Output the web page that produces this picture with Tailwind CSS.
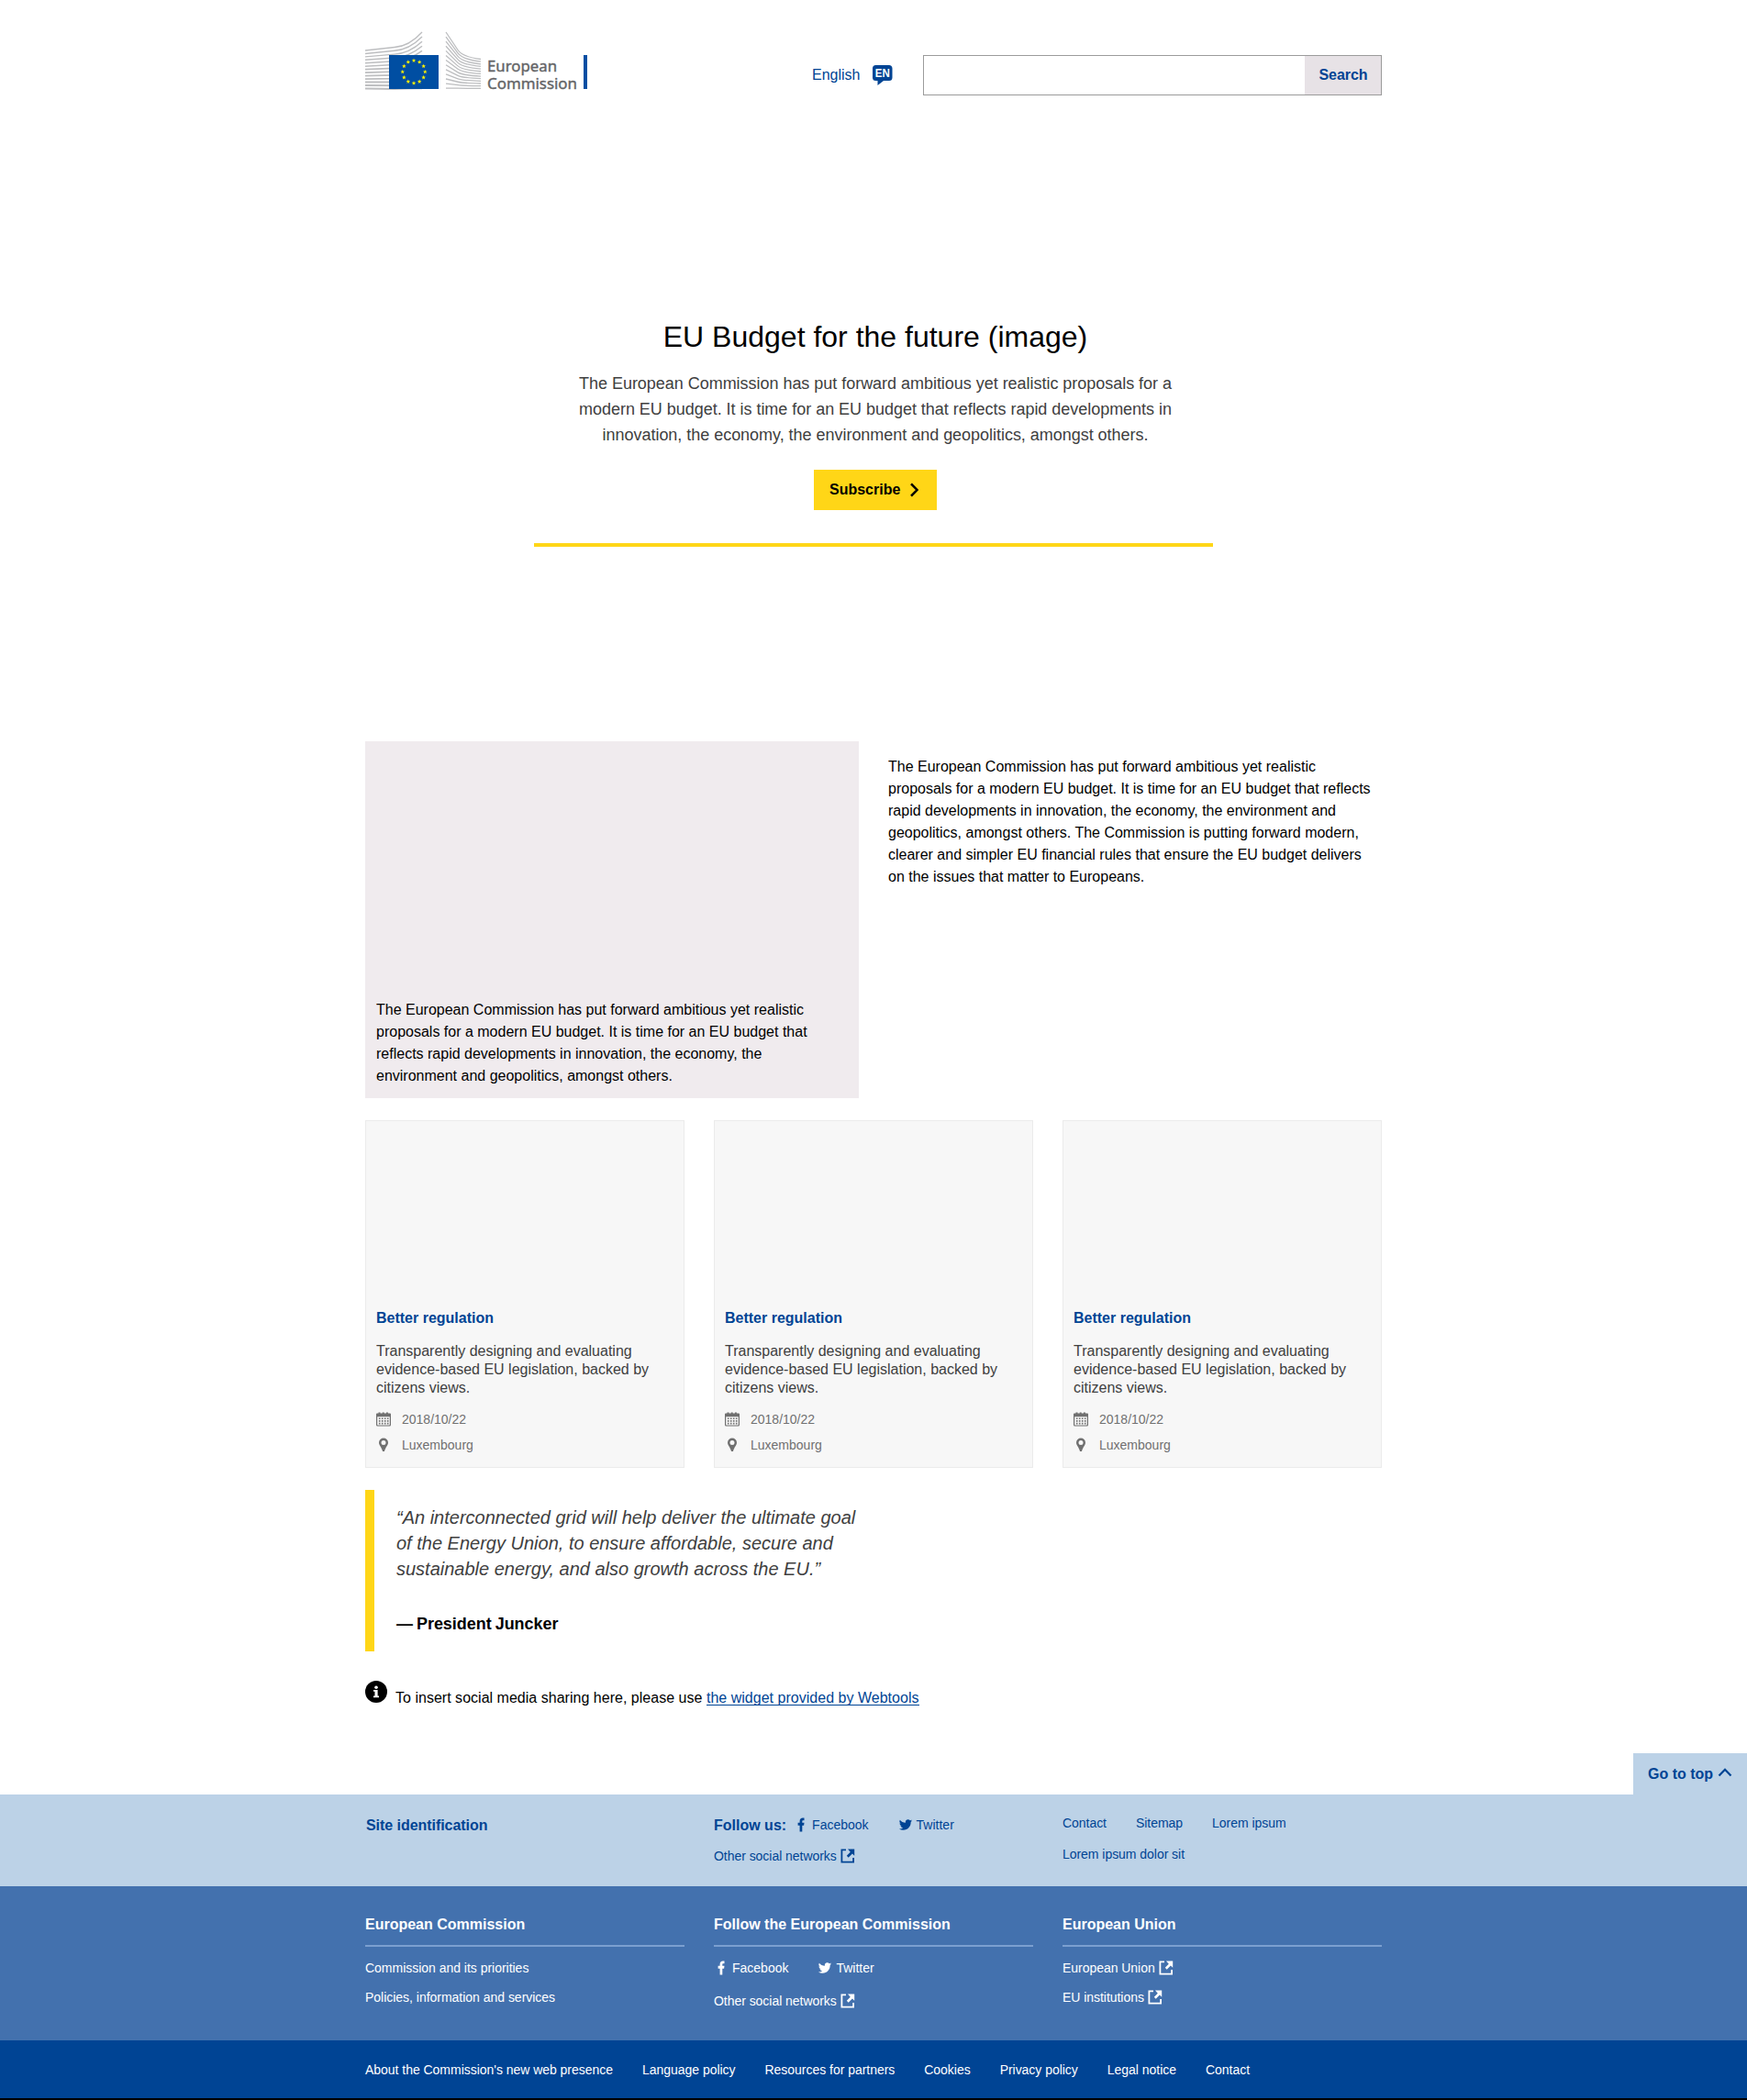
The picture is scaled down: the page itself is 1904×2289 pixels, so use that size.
<!DOCTYPE html>
<html lang="en">
<head>
<meta charset="utf-8">
<title>EU Budget for the future</title>
<script src="https://cdn.jsdelivr.net/npm/@tailwindcss/browser@4"></script>
</head>
<body class="bg-white font-['Liberation_Sans',Arial,sans-serif] text-base text-black">
<!-- icon symbols -->
<svg class="hidden">
  <symbol id="fb" viewBox="0 0 16 16"><path fill="currentColor" d="M6.600 15.500V8.700H4.600V5.800h2V4.200C6.600 1.700 7.800.5 10 .5c.8 0 1.400.1 1.500.1v2.600h-1c-1 0-1.200.5-1.200 1.200v1.400h2.200l-.4 2.900H9.300v6.800z"/></symbol>
  <symbol id="tw" viewBox="-1.500 -1.500 27 27"><path fill="currentColor" d="M23.950 4.570a10 10 0 0 1-2.820.77 4.960 4.960 0 0 0 2.160-2.720c-.95.55-2 .95-3.130 1.180a4.920 4.920 0 0 0-8.380 4.480C7.690 8.100 4.070 6.130 1.640 3.160a4.920 4.920 0 0 0 1.520 6.570 4.900 4.900 0 0 1-2.230-.61v.06a4.920 4.920 0 0 0 3.950 4.830 5 5 0 0 1-2.210.08 4.940 4.940 0 0 0 4.600 3.420A9.870 9.870 0 0 1 0 19.540a14 14 0 0 0 7.550 2.210c9.050 0 14-7.500 14-13.980 0-.21 0-.42-.02-.63a9.940 9.940 0 0 0 2.460-2.550z"/></symbol>
  <symbol id="ext" viewBox="0 0 16 16"><path fill="none" stroke="currentColor" stroke-width="1.800" d="M6 1.400H1.400v13.200h12.700V10"/><path fill="currentColor" d="M8 .5h7.200v7.200l-2.300-2.300-4.200 4.300-1.900-1.900 4-4.100z"/></symbol>
  <symbol id="cal" viewBox="0 0 16 16"><path fill="currentColor" fill-rule="evenodd" d="M1 1.500h1.500V.5h2v1h2.200v-1h2v1h2.200v-1h2v1H15a1 1 0 0 1 1 1V14a1.500 1.500 0 0 1-1.500 1.500h-13A1.500 1.500 0 0 1 0 14V2.500a1 1 0 0 1 1-1zM1.200 5.200v8.600c0 .4.2.6.6.6h12.400c.4 0 .6-.2.6-.6V5.200z"/><path stroke="currentColor" stroke-width="1.600" stroke-dasharray="1.600 1.400" d="M2.900 7.200h10.600M2.900 9.900h10.600M2.900 12.600h10.600"/></symbol>
  <symbol id="pin" viewBox="0 0 16 16"><path fill="currentColor" fill-rule="evenodd" d="M8 .5a5 5 0 0 1 5 5c0 2.600-2.800 4.800-4 9.500H7C5.800 10.300 3 8.100 3 5.500a5 5 0 0 1 5-5zm0 2.400a2.500 2.500 0 1 0 0 5 2.500 2.500 0 0 0 0-5z"/></symbol>
</svg>

<header class="mx-auto flex h-[120px] w-[1108px] items-start">
  <svg class="mt-[30px] h-[72px] w-[250px]" viewBox="398 30 250 72">
    <g id="rays" fill="none" stroke="#bdbec0"></g>
    <rect x="424" y="60" width="54" height="37" fill="#004ea2"/>
    <g id="stars" fill="#fff200"></g>
    <g font-family="'Noto Sans','Open Sans',sans-serif" font-size="16.500" fill="#646567" stroke="#646567" stroke-width=".4">
      <text x="531" y="77.600" textLength="76" lengthAdjust="spacingAndGlyphs">European</text>
      <text x="531" y="96.700" textLength="98" lengthAdjust="spacingAndGlyphs">Commission</text>
    </g>
    <rect x="636" y="60" width="4" height="37" fill="#004ea2"/>
  </svg>
  <a class="mt-[70px] ml-[237px] flex h-6 items-center text-[#004494]">English
    <svg class="ml-[13px] h-6 w-6" viewBox="0 0 24 24"><path fill="#004494" d="M4.500 1h14A3.500 3.500 0 0 1 22.500 4.500v10a3.500 3.500 0 0 1-3.500 3.500H13l-6.500 5V18h-2A3.500 3.500 0 0 1 1 14.500v-10A3.500 3.500 0 0 1 4.500 1z"/><text x="11.800" y="14" text-anchor="middle" textLength="16" lengthAdjust="spacingAndGlyphs" font-family="Liberation Sans" font-weight="700" font-size="13" fill="#fff">EN</text></svg>
  </a>
  <div class="mt-[60px] ml-auto flex h-11 w-[500px] border border-[#9b9b9b]">
    <div class="flex-1"></div>
    <div class="flex w-[83px] items-center justify-center bg-[#e7e2e6] pl-px font-bold tracking-[-0.05px] text-[#004494]">Search</div>
  </div>
</header>

<section class="mx-auto flex w-[740px] flex-col items-center border-b-4 border-[#ffd617] pt-[227px] pb-9 pl-1">
  <h1 class="text-[32px] leading-10">EU Budget for the future (image)</h1>
  <p class="mt-[17px] w-[660px] text-center text-lg leading-7 tracking-[-0.03px] text-[#404040]">The European Commission has put forward ambitious yet realistic proposals for a modern EU budget. It is time for an EU budget that reflects rapid developments in innovation, the economy, the environment and geopolitics, amongst others.</p>
  <a class="mt-6 flex h-11 w-[134px] items-center bg-[#ffd617] pl-[17px] font-bold">Subscribe
    <svg class="ml-2 h-4 w-4" viewBox="0 0 16 16"><path fill="none" stroke="#000" stroke-width="2.500" d="M4 1.300 10.500 8 4 14.700"/></svg>
  </a>
</section>

<main class="mx-auto w-[1108px] pt-[212px]">
  <div class="grid grid-cols-2 gap-8">
    <div class="flex h-[389px] flex-col justify-end bg-[#f0ebee] p-3 leading-6">
      <p class="w-[490px]">The European Commission has put forward ambitious yet realistic proposals for a modern EU budget. It is time for an EU budget that reflects rapid developments in innovation, the economy, the environment and geopolitics, amongst others.</p>
    </div>
    <p class="pt-4 leading-6">The European Commission has put forward ambitious yet realistic proposals for a modern EU budget. It is time for an EU budget that reflects rapid developments in innovation, the economy, the environment and geopolitics, amongst others. The Commission is putting forward modern, clearer and simpler EU financial rules that ensure the EU budget delivers on the issues that matter to Europeans.</p>
  </div>

  <div class="mt-6 grid grid-cols-3 gap-8">
    <article class="h-[379px] border border-[#ebebeb] bg-[#f7f7f7] px-[11px] pt-[203px]">
      <h2 class="leading-6 font-bold text-[#004494]">Better regulation</h2>
      <p class="mt-[14px] leading-5 text-[#404040]">Transparently designing and evaluating evidence-based EU legislation, backed by citizens views.</p>
      <div class="mt-[14px] flex h-5 items-center text-sm text-[#707070]"><svg class="mr-3 h-4 w-4"><use href="#cal"/></svg>2018/10/22</div>
      <div class="mt-2 flex h-5 items-center text-sm text-[#707070]"><svg class="mr-3 h-4 w-4"><use href="#pin"/></svg>Luxembourg</div>
    </article>
    <article class="h-[379px] border border-[#ebebeb] bg-[#f7f7f7] px-[11px] pt-[203px]">
      <h2 class="leading-6 font-bold text-[#004494]">Better regulation</h2>
      <p class="mt-[14px] leading-5 text-[#404040]">Transparently designing and evaluating evidence-based EU legislation, backed by citizens views.</p>
      <div class="mt-[14px] flex h-5 items-center text-sm text-[#707070]"><svg class="mr-3 h-4 w-4"><use href="#cal"/></svg>2018/10/22</div>
      <div class="mt-2 flex h-5 items-center text-sm text-[#707070]"><svg class="mr-3 h-4 w-4"><use href="#pin"/></svg>Luxembourg</div>
    </article>
    <article class="h-[379px] border border-[#ebebeb] bg-[#f7f7f7] px-[11px] pt-[203px]">
      <h2 class="leading-6 font-bold text-[#004494]">Better regulation</h2>
      <p class="mt-[14px] leading-5 text-[#404040]">Transparently designing and evaluating evidence-based EU legislation, backed by citizens views.</p>
      <div class="mt-[14px] flex h-5 items-center text-sm text-[#707070]"><svg class="mr-3 h-4 w-4"><use href="#cal"/></svg>2018/10/22</div>
      <div class="mt-2 flex h-5 items-center text-sm text-[#707070]"><svg class="mr-3 h-4 w-4"><use href="#pin"/></svg>Luxembourg</div>
    </article>
  </div>

  <blockquote class="mt-6 h-[176px] w-[554px] border-l-[10px] border-[#ffd617] pt-4 pl-6">
    <p class="text-xl leading-7 text-[#404040] italic">“An interconnected grid will help deliver the ultimate goal of the Energy Union, to ensure affordable, secure and sustainable energy, and also growth across the EU.”</p>
    <footer class="mt-8 text-lg leading-7 font-bold tracking-[-0.03px] [word-spacing:-1px]">— President Juncker</footer>
  </blockquote>

  <div class="mt-8 flex h-[79px] items-start">
    <svg class="h-6 w-6" viewBox="0 0 24 24"><circle cx="12" cy="12" r="12"/><circle cx="12" cy="7.200" r="1.800" fill="#fff"/><path fill="#fff" d="M9 10h4.600v6.500H15v1.800H9v-1.800h1.500v-4.700H9z"/></svg>
    <p class="mt-[7px] ml-[9px] leading-6 tracking-[0.02px]">To insert social media sharing here, please use <a class="inline-block h-[17px] border-b border-[#004494] leading-[18px] text-[#004494]">the widget provided by Webtools</a></p>
  </div>
</main>

<div class="ml-auto flex h-[45px] w-[124px] items-center bg-[#bcd2e7] pl-4 font-bold text-[#004494]">Go to top
  <svg class="ml-[5px] h-4 w-4" viewBox="0 0 16 16"><path fill="none" stroke="currentColor" stroke-width="2.300" d="M1.500 9.500 8 2.800l6.500 6.700"/></svg>
</div>

<footer>
  <div class="h-[100px] bg-[#bcd2e7] text-sm text-[#004494]">
    <div class="mx-auto grid w-[1108px] grid-cols-3 gap-8">
      <h3 class="mt-[22px] pl-px text-base font-bold tracking-[-0.05px]">Site identification</h3>
      <div class="mt-[22px]">
        <div class="flex h-6 items-center"><b class="mr-2 text-base">Follow us:</b><div class="-mt-0.5 flex items-center"><svg class="mr-1 h-4 w-4"><use href="#fb"/></svg>Facebook<svg class="mr-1 ml-8 h-4 w-4"><use href="#tw"/></svg>Twitter</div></div>
        <div class="mt-[9px] flex h-6 items-center tracking-[-0.04px]">Other social networks<svg class="ml-1 h-4 w-4"><use href="#ext"/></svg></div>
      </div>
      <div class="mt-[21px] flex flex-wrap content-start gap-x-8 gap-y-[14px] leading-5 tracking-[-0.04px]"><a>Contact</a><a>Sitemap</a><a>Lorem ipsum</a><a>Lorem ipsum dolor sit</a></div>
    </div>
  </div>
  <div class="h-[168px] bg-[#4371ae] text-sm text-white">
    <div class="mx-auto grid w-[1108px] grid-cols-3 gap-8 pt-[30px]">
      <div>
        <h3 class="h-9 border-b-2 border-[#7b9fd0] text-base font-bold">European Commission</h3>
        <div class="mt-[11px] flex h-6 items-center tracking-[-0.02px]">Commission and its priorities</div>
        <div class="mt-2 flex h-6 items-center tracking-[-0.02px]">Policies, information and services</div>
      </div>
      <div>
        <h3 class="h-9 border-b-2 border-[#7b9fd0] text-base font-bold">Follow the European Commission</h3>
        <div class="mt-[11px] flex h-6 items-center"><svg class="mr-1 h-4 w-4"><use href="#fb"/></svg>Facebook<svg class="mr-1 ml-8 h-4 w-4"><use href="#tw"/></svg>Twitter</div>
        <div class="mt-3 flex h-6 items-center tracking-[-0.04px]">Other social networks<svg class="ml-1 h-4 w-4"><use href="#ext"/></svg></div>
      </div>
      <div>
        <h3 class="h-9 border-b-2 border-[#7b9fd0] text-base font-bold">European Union</h3>
        <div class="mt-[11px] flex h-6 items-center tracking-[-0.04px]">European Union<svg class="ml-1 h-4 w-4"><use href="#ext"/></svg></div>
        <div class="mt-2 flex h-6 items-center tracking-[-0.04px]">EU institutions<svg class="ml-1 h-4 w-4"><use href="#ext"/></svg></div>
      </div>
    </div>
  </div>
  <div class="h-[65px] border-b-2 border-black bg-[#004494] text-sm tracking-[-0.03px] text-white">
    <nav class="mx-auto flex h-16 w-[1108px] items-center gap-8"><a>About the Commission's new web presence</a><a>Language policy</a><a>Resources for partners</a><a>Cookies</a><a>Privacy policy</a><a>Legal notice</a><a>Contact</a></nav>
  </div>
</footer>

<script>
  // Curved rays on both sides of the flag, then the circle of twelve stars.
  let rays = '';
  for (let i = 0; i < 13; i++) {
    const l = 55 + i * 3.45, r = 35 + i * 5.1, k = 50.5 + i * 3.8, f = (12 - i) / 12;
    rays += `<path stroke-width="${(1.3 + i * 0.06).toFixed(2)}" d="M398 ${l}L430 ${k + 1}Q446 ${k} 460 ${r}"/>`;
    const e = 64.5 + i * 2.65;
    rays += `<path stroke-width="1.3" d="M486 ${r}L499 ${r + 19.5 * f}Q504 ${e - 2.5 * f} 524 ${e}"/>`;
  }
  document.getElementById('rays').innerHTML = rays;
  let stars = '';
  for (let i = 0; i < 12; i++) {
    const a = i * Math.PI / 6, cx = 451 + 12.3 * Math.sin(a), cy = 78.3 - 12.3 * Math.cos(a), p = [];
    for (let j = 0; j < 10; j++) {
      const r = j % 2 ? 1.05 : 2.4, b = j * Math.PI / 5;
      p.push((cx + r * Math.sin(b)).toFixed(2) + ',' + (cy - r * Math.cos(b)).toFixed(2));
    }
    stars += `<polygon points="${p.join(' ')}"/>`;
  }
  document.getElementById('stars').innerHTML = stars;
</script>
</body>
</html>
